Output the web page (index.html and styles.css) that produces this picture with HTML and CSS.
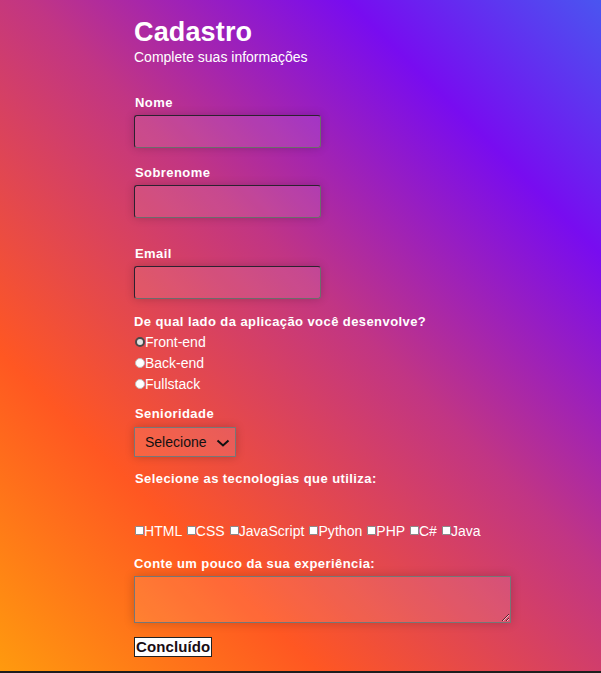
FILE: index.html
```html
<!DOCTYPE html>
<html lang="pt-BR">
<head>
<meta charset="utf-8">
<title>Cadastro</title>
<link rel="stylesheet" href="styles.css">
</head>
<body>
<div class="page">
  <form class="form">
    <h1 class="title">Cadastro</h1>
    <p class="subtitle">Complete suas informações</p>

    <label class="label label-nome" for="nome">Nome</label>
    <input class="text-input" id="nome" type="text">

    <label class="label label-sobrenome" for="sobrenome">Sobrenome</label>
    <input class="text-input" id="sobrenome" type="text">

    <label class="label label-email" for="email">Email</label>
    <input class="text-input" id="email" type="email">

    <p class="label label-lado">De qual lado da aplicação você desenvolve?</p>
    <div class="radios">
      <div class="radio-row"><input class="radio radio-hover" type="radio" name="lado" id="front"><label for="front">Front-end</label></div>
      <div class="radio-row"><input class="radio" type="radio" name="lado" id="back"><label for="back">Back-end</label></div>
      <div class="radio-row"><input class="radio" type="radio" name="lado" id="full"><label for="full">Fullstack</label></div>
    </div>

    <label class="label label-senioridade" for="senioridade">Senioridade</label>
    <div class="select-wrap">
      <select class="select" id="senioridade">
        <option>Selecione</option>
        <option>Júnior</option>
        <option>Pleno</option>
        <option>Sênior</option>
      </select>
      <svg class="chevron" width="14" height="8" viewBox="0 0 14 8"><path d="M1.5 1.5 L7 6.5 L12.5 1.5" fill="none" stroke="#111" stroke-width="2"/></svg>
    </div>

    <p class="label label-tec">Selecione as tecnologias que utiliza:</p>
    <div class="checks"><input class="check" type="checkbox" id="html"><label for="html">HTML</label> <input class="check" type="checkbox" id="css"><label for="css">CSS</label> <input class="check" type="checkbox" id="js"><label for="js">JavaScript</label> <input class="check" type="checkbox" id="py"><label for="py">Python</label> <input class="check" type="checkbox" id="php"><label for="php">PHP</label> <input class="check" type="checkbox" id="cs"><label for="cs">C#</label> <input class="check" type="checkbox" id="java"><label for="java">Java</label></div>

    <label class="label label-exp" for="exp">Conte um pouco da sua experiência:</label>
    <textarea class="textarea" id="exp"></textarea>

    <button class="button" type="button">Concluído</button>
  </form>
</div>
</body>
</html>
```

FILE: styles.css
```css
html {
  background: #1e1e1e;
}

body {
  margin: 0;
  font-family: "Liberation Sans", Arial, sans-serif;
  color: #ffffff;
}

.page {
  box-sizing: border-box;
  height: 671px;
  padding-top: 17px;
  background: linear-gradient(45deg, #ff9a0e 0%, #ff5722 25%, #c13584 55%, #780cf0 80%, #4a55f0 100%);
  overflow: hidden;
}

.form {
  margin-left: 134px;
  width: 420px;
}

.title {
  margin: 0;
  font-size: 27px;
  line-height: 30px;
  font-weight: bold;
  letter-spacing: 0.15px;
}

.subtitle {
  margin: 2px 0 0;
  font-size: 14px;
  line-height: 16px;
}

.label {
  display: block;
  margin: 0;
  padding-left: 1px;
  font-size: 13px;
  line-height: 15px;
  font-weight: bold;
  letter-spacing: 0.42px;
}

.label-nome { margin-top: 30px; }
.label-sobrenome { margin-top: 17px; }
.label-email { margin-top: 28px; }
.label-lado { margin-top: 15px; padding-left: 0; }
.label-senioridade { margin-top: 11px; }
.label-tec { margin-top: 14px; }
.label-exp { margin-top: 17px; padding-left: 0; }

.text-input {
  display: block;
  box-sizing: border-box;
  width: 187px;
  height: 33px;
  margin: 5px 0 0;
  border: 1px solid;
  border-color: #2c2230 #6c6c6c #6c6c6c #2c2230;
  border-radius: 3px;
  background: rgba(255, 255, 255, 0.1);
  box-shadow: 0 0 10px rgba(0, 0, 0, 0.2);
  color: #fff;
  font: 14px "Liberation Sans", Arial, sans-serif;
}

.radios {
  margin-top: 3px;
}

.radio-row {
  font-size: 14px;
  line-height: 21px;
  height: 21px;
}

.radio {
  -webkit-appearance: none;
  appearance: none;
  box-sizing: border-box;
  width: 10px;
  height: 10px;
  margin: 0 0 0 1px;
  border: 1px solid #bdbdbd;
  border-radius: 50%;
  background: #ffffff;
  vertical-align: 0;
}

.radio-hover {
  border: 2px solid #4a4a4a;
  background: #e2e2e2;
}

.select-wrap {
  position: relative;
  width: 102px;
  margin-top: 6px;
}

.select {
  -webkit-appearance: none;
  appearance: none;
  display: block;
  box-sizing: border-box;
  width: 102px;
  height: 30px;
  margin: 0;
  padding: 0 0 0 10px;
  border: 1px solid #777777;
  border-radius: 0;
  background: rgba(255, 255, 255, 0.1);
  box-shadow: 0 0 10px rgba(0, 0, 0, 0.2);
  color: #111111;
  font: 14px "Liberation Sans", Arial, sans-serif;
}

.chevron {
  position: absolute;
  left: 82px;
  top: 12px;
  pointer-events: none;
}

.checks {
  margin-top: 37px;
  font-size: 14px;
  line-height: 16px;
  letter-spacing: 0.05px;
  white-space: nowrap;
}

.check {
  -webkit-appearance: none;
  appearance: none;
  box-sizing: border-box;
  width: 9px;
  height: 9px;
  margin: 0 0 0 1px;
  border: 1px solid #8a8a8a;
  border-radius: 1px;
  background: #ffffff;
  vertical-align: 1px;
}

.textarea {
  display: block;
  box-sizing: border-box;
  width: 377px;
  height: 47px;
  margin: 5px 0 0;
  border: 1px solid #767676;
  border-radius: 0;
  background: rgba(255, 255, 255, 0.1);
  box-shadow: 0 0 10px rgba(0, 0, 0, 0.2);
  color: #fff;
  font: 14px "Liberation Sans", Arial, sans-serif;
}

.button {
  display: block;
  box-sizing: border-box;
  height: 20px;
  margin: 14px 0 0;
  padding: 0 1px;
  border: 1px solid #222222;
  border-radius: 0;
  background: #ffffff;
  color: #1a0c12;
  font: bold 15px/18px "Liberation Sans", Arial, sans-serif;
  letter-spacing: 0.1px;
}
```
